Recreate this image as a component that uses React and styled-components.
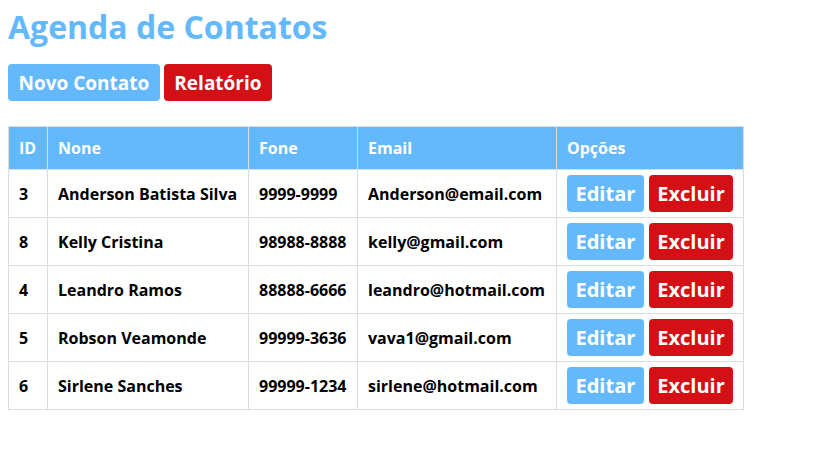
import React from "react";
import styled, { createGlobalStyle } from "styled-components";

const GlobalStyle = createGlobalStyle`
  body {
    margin: 8px;
    background: #fff;
    font-family: "Open Sans", "Liberation Sans", sans-serif;
  }
`;

const BLUE = "#64b8fc";
const RED = "#d31016";

const Title = styled.h1`
  margin: -3px 0 0;
  font-size: 32px;
  font-weight: 700;
  color: ${BLUE};
  line-height: 43px;
`;

const Toolbar = styled.div`
  display: flex;
  gap: 4px;
  margin-top: 16px;
`;

const Button = styled.button`
  border: none;
  border-radius: 4px;
  color: #fff;
  font-family: "Open Sans", "Liberation Sans", sans-serif;
  font-weight: 700;
  font-size: ${(p) => (p.$big ? "20px" : "19px")};
  height: 37px;
  padding: 0 ${(p) => (p.$big ? "8.5px" : "10.5px")};
  background: ${(p) => (p.$danger ? RED : BLUE)};
  cursor: pointer;
`;

const Table = styled.table`
  margin-top: 25px;
  border-collapse: collapse;
  font-size: 16px;
  font-weight: 700;
  color: #000;
`;

const Th = styled.th`
  background: ${BLUE};
  color: #fff;
  text-align: left;
  border: 1px solid #ddd;
  padding: 10px 10px;
  height: 22px;
  line-height: 22px;
  width: ${(p) => p.$w}px;
`;

const Td = styled.td`
  border: 1px solid #ddd;
  padding: 5px 10px;
  height: 37px;
  vertical-align: middle;
  line-height: 22px;
`;

const Actions = styled.div`
  display: flex;
  gap: 5px;
`;

const contatos = [
  { id: 3, nome: "Anderson Batista Silva", fone: "9999-9999", email: "Anderson@email.com" },
  { id: 8, nome: "Kelly Cristina", fone: "98988-8888", email: "kelly@gmail.com" },
  { id: 4, nome: "Leandro Ramos", fone: "88888-6666", email: "leandro@hotmail.com" },
  { id: 5, nome: "Robson Veamonde", fone: "99999-3636", email: "vava1@gmail.com" },
  { id: 6, nome: "Sirlene Sanches", fone: "99999-1234", email: "sirlene@hotmail.com" },
];

export default function App() {
  return (
    <>
      <GlobalStyle />
      <Title>Agenda de Contatos</Title>
      <Toolbar>
        <Button>Novo Contato</Button>
        <Button $danger>Relatório</Button>
      </Toolbar>
      <Table>
        <thead>
          <tr>
            <Th $w={18}>ID</Th>
            <Th $w={180}>None</Th>
            <Th $w={88}>Fone</Th>
            <Th $w={178}>Email</Th>
            <Th $w={166}>Opções</Th>
          </tr>
        </thead>
        <tbody>
          {contatos.map((c) => (
            <tr key={c.id}>
              <Td>{c.id}</Td>
              <Td>{c.nome}</Td>
              <Td>{c.fone}</Td>
              <Td>{c.email}</Td>
              <Td>
                <Actions>
                  <Button $big>Editar</Button>
                  <Button $big $danger>Excluir</Button>
                </Actions>
              </Td>
            </tr>
          ))}
        </tbody>
      </Table>
    </>
  );
}
